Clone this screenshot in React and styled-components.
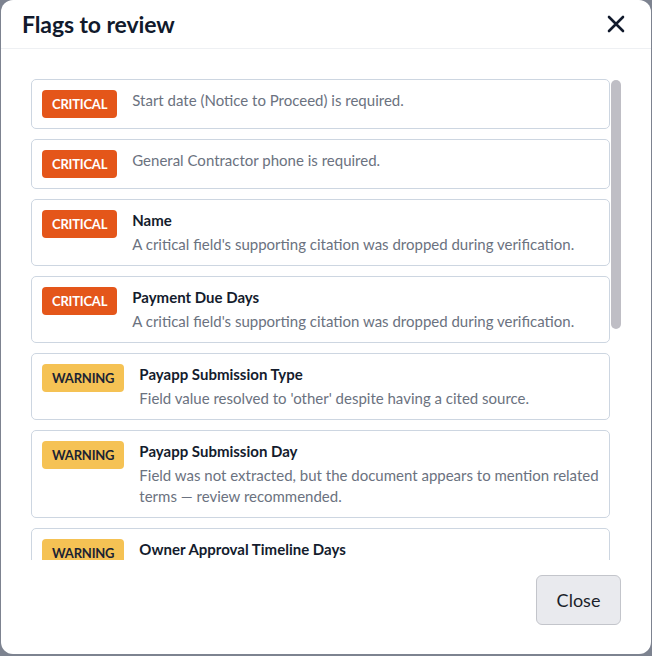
import React from 'react'
import styled, { createGlobalStyle } from 'styled-components';

const GlobalStyle = createGlobalStyle`
    html, body {
        margin: 0;
        padding: 0;
        background: #7d8390;
        font-family: Lato, "Noto Sans", sans-serif;
    }
`;

const Backdrop = styled.div`
    width: 652px;
    height: 656px;
    display: flex;
    align-items: flex-start;
    justify-content: center;
`;

const Modal = styled.div`
    width: 650px;
    height: 654px;
    background: #ffffff;
    border-radius: 12px;
    display: flex;
    flex-direction: column;
    overflow: hidden;
`;

const Header = styled.div`
    height: 48px;
    border-bottom: 1px solid #eef0f3;
    display: flex;
    align-items: center;
    justify-content: space-between;
    padding: 0 23px 0 21px;
    flex-shrink: 0;
`;

const Title = styled.h2`
    margin: 0;
    font-size: 23px;
    font-weight: 700;
    color: #111a2c;
    letter-spacing: -0.1px;
`;

const CloseIcon = styled.button`
    border: none;
    background: none;
    padding: 0;
    width: 24px;
    height: 24px;
    display: flex;
    align-items: center;
    justify-content: center;
    color: #111a2c;
    cursor: pointer;
`;

const Body = styled.div`
    flex: 1;
    min-height: 0;
    padding: 30px 30px 0 30px;
    display: flex;
    gap: 1px;
`;

const List = styled.div`
    flex: 1;
    overflow: hidden;
    display: flex;
    flex-direction: column;
    gap: 10px;
`;

/* thin custom scrollbar beside the list */
const ScrollTrack = styled.div`
    width: 10px;
    flex-shrink: 0;
    padding-top: 1px;
`;

const ScrollThumb = styled.div`
    width: 10px;
    height: 249px;
    border-radius: 5px;
    background: #bfbec5;
`;

const Card = styled.div`
    flex-shrink: 0;
    border: 1px solid #cdd6e1;
    border-radius: 5px;
    padding: 10px;
    display: flex;
    align-items: flex-start;
    gap: 15px;
`;

const Badge = styled.span`
    flex-shrink: 0;
    height: 28px;
    padding: 0 10px;
    border-radius: 4px;
    display: inline-flex;
    align-items: center;
    font-size: 13px;
    font-weight: 700;
    letter-spacing: -0.2px;
    background: ${p => (p.level === 'critical' ? '#e4561a' : '#f5c254')};
    color: ${p => (p.level === 'critical' ? '#ffffff' : '#1b2333')};
`;

const Text = styled.div`
    flex: 1;
`;

const Field = styled.div`
    font-size: 15px;
    font-weight: 700;
    line-height: 20px;
    color: #141c2d;
`;

const Message = styled.div`
    font-size: 15px;
    line-height: 21px;
    color: #6b7280;
    margin-top: ${p => (p.$single ? '0' : '4px')};
`;

const Footer = styled.div`
    flex-shrink: 0;
    display: flex;
    justify-content: flex-end;
    padding: 15px 30px 29px 30px;
`;

const CloseButton = styled.button`
    width: 85px;
    height: 50px;
    border: 1px solid #c3c5cb;
    border-radius: 6px;
    background: #e9eaee;
    font-family: inherit;
    font-size: 18px;
    color: #1b1f2a;
    cursor: pointer;
`;

const flags = [
    { level: 'critical', message: 'Start date (Notice to Proceed) is required.' },
    { level: 'critical', message: 'General Contractor phone is required.' },
    { level: 'critical', field: 'Name', message: "A critical field's supporting citation was dropped during verification." },
    { level: 'critical', field: 'Payment Due Days', message: "A critical field's supporting citation was dropped during verification." },
    { level: 'warning', field: 'Payapp Submission Type', message: "Field value resolved to 'other' despite having a cited source." },
    { level: 'warning', field: 'Payapp Submission Day', message: 'Field was not extracted, but the document appears to mention related terms — review recommended.' },
    { level: 'warning', field: 'Owner Approval Timeline Days', message: 'Field was not extracted, but the document appears to mention related terms — review recommended.' },
    { level: 'warning', field: 'Retainage Percentage', message: "Field value resolved to 'other' despite having a cited source." },
    { level: 'warning', field: 'Retainage Release Terms', message: 'Field was not extracted, but the document appears to mention related terms — review recommended.' },
];

const CloseX = () => (
    <svg width="20" height="20" viewBox="0 0 20 20" fill="none">
        <path d="M3 3L17 17M17 3L3 17" stroke="currentColor" strokeWidth="2.6" strokeLinecap="round"/>
    </svg>
);

const App = () => {
    return (
        <Backdrop>
            <GlobalStyle/>
            <Modal>
                <Header>
                    <Title>Flags to review</Title>
                    <CloseIcon aria-label="Close">
                        <CloseX/>
                    </CloseIcon>
                </Header>
                <Body>
                    <List>
                        {flags.map((f, i) => (
                            <Card key={i}>
                                <Badge level={f.level}>{f.level.toUpperCase()}</Badge>
                                <Text>
                                    {f.field && <Field>{f.field}</Field>}
                                    <Message $single={!f.field}>{f.message}</Message>
                                </Text>
                            </Card>
                        ))}
                    </List>
                    <ScrollTrack>
                        <ScrollThumb/>
                    </ScrollTrack>
                </Body>
                <Footer>
                    <CloseButton>Close</CloseButton>
                </Footer>
            </Modal>
        </Backdrop>
    )
}

export default App;
